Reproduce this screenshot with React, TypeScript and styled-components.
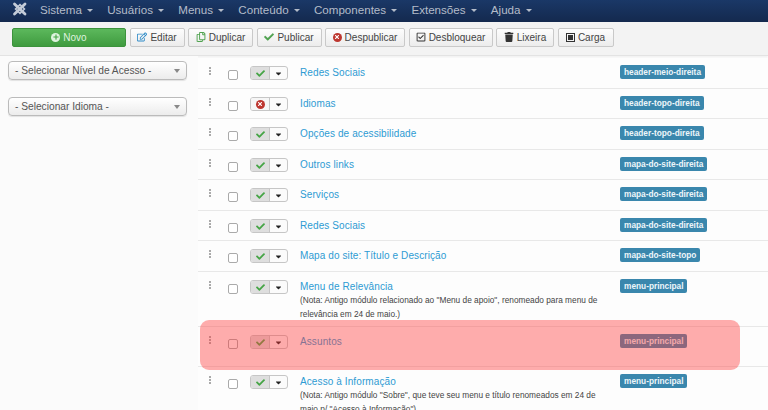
import React from "react";
import styled, { createGlobalStyle } from "styled-components";
import { FaCheck, FaTimes, FaPlus, FaRegEdit, FaRegCopy, FaRegCheckSquare, FaTrash, FaCaretDown } from "react-icons/fa";

const Global = createGlobalStyle`
  html, body { margin: 0; padding: 0; background: #fff; overflow: hidden; }
  body { width: 768px; height: 410px; font-family: "Liberation Sans", Arial, sans-serif; font-size: 10px; color: #333; }
`;

const Page = styled.div`
  position: relative;
  width: 768px;
  height: 410px;
  overflow: hidden;
`;

const Navbar = styled.nav`
  height: 22px;
  box-sizing: border-box;
  background: linear-gradient(#1a3867, #14294e);
  display: flex;
  align-items: center;
  padding: 0 0 4px 12px;
  color: #b4bcc9;
  font-size: 11.6px;
`;

const Logo = styled.svg`
  width: 16px;
  height: 14px;
  margin-right: 12px;
`;

const NavItem = styled.span`
  display: inline-flex;
  align-items: center;
  margin-right: 14.3px;
  white-space: nowrap;
  &::after {
    content: "";
    margin-left: 5px;
    margin-top: 2px;
    border-left: 3px solid transparent;
    border-right: 3px solid transparent;
    border-top: 3px solid #b4bcc9;
  }
`;

const Subhead = styled.div`
  height: 34px;
  box-sizing: border-box;
  background: #f3f3f3;
  border-bottom: 1px solid #e3e3e3;
  box-shadow: 0 2px 2px rgba(0, 0, 0, 0.05);
  display: flex;
  align-items: center;
  padding: 0 0 3px 12px;
  gap: 3.5px;
`;

const ToolButton = styled.button<{ $w: number }>`
  width: ${(p) => p.$w}px;
  height: 19px;
  padding: 0;
  display: inline-flex;
  align-items: center;
  justify-content: center;
  gap: 3px;
  background: linear-gradient(#fdfdfd, #ececec);
  border: 1px solid #c9c9c9;
  border-radius: 2px;
  color: #444;
  font: 10px "Liberation Sans", Arial, sans-serif;
  white-space: nowrap;
`;

const NewButton = styled(ToolButton)`
  background: linear-gradient(#5cb85c, #3f9b3f);
  border-color: #3c933c;
  color: #dff3df;
`;

const IconC = styled.span<{ $c: string }>`
  color: ${(p) => p.$c};
  display: inline-flex;
  font-size: 10px;
`;

const CircleIcon = styled.span<{ $bg: string; $c: string }>`
  width: 9px;
  height: 9px;
  border-radius: 50%;
  background: ${(p) => p.$bg};
  color: ${(p) => p.$c};
  display: inline-flex;
  align-items: center;
  justify-content: center;
  font-size: 6px;
`;

const SquareStop = styled.span`
  width: 9px;
  height: 9px;
  border: 1px solid #333;
  box-sizing: border-box;
  display: inline-flex;
  align-items: center;
  justify-content: center;
  &::after {
    content: "";
    width: 5px;
    height: 5px;
    background: #333;
  }
`;

const Main = styled.div`
  display: flex;
`;

const Sidebar = styled.aside`
  width: 198px;
  height: 354px;
  flex: none;
  padding: 5px 0 0 8px;
  box-sizing: border-box;
  background: #fbfbfb;
`;

const SelectBox = styled.div`
  width: 179px;
  height: 19px;
  box-sizing: border-box;
  display: flex;
  align-items: center;
  justify-content: space-between;
  padding: 0 6px;
  margin-bottom: 17px;
  border: 1px solid #bbb;
  border-radius: 4px;
  background: linear-gradient(#fff, #ececec);
  color: #555;
  font-size: 10.2px;
  box-shadow: 0 1px 1px rgba(0, 0, 0, 0.1);
  &::after {
    content: "";
    border-left: 3px solid transparent;
    border-right: 3px solid transparent;
    border-top: 4px solid #888;
  }
`;

const List = styled.div`
  flex: 1;
  min-width: 0;
  padding-top: 2px;
`;

const Row = styled.div<{ $h: number }>`
  height: ${(p) => p.$h}px;
  box-sizing: border-box;
  border-bottom: 1px solid #e8e8e8;
  display: grid;
  grid-template-columns: 20px 21px 50px 320px 1fr;
  padding: 9px 0 0 11px;
  background: #fdfdfd;
`;

const Drag = styled.span`
  width: 2px;
  height: 9px;
  background-image: linear-gradient(#aaa 2px, transparent 2px);
  background-size: 2px 3px;
`;

const Check = styled.span`
  width: 10px;
  height: 10px;
  box-sizing: border-box;
  margin: 3px 0 0 -1px;
  border: 1px solid #aaa;
  border-radius: 2px;
  background: #fff;
`;

const StatusGroup = styled.div`
  width: 38px;
  height: 14px;
  margin-top: -1px;
  display: flex;
  border: 1px solid #c6c6c6;
  border-radius: 3px;
  box-sizing: border-box;
  overflow: hidden;
  background: #fbfbfb;
`;

const StatusState = styled.span<{ $off?: boolean }>`
  width: 18px;
  display: flex;
  align-items: center;
  justify-content: center;
  background: ${(p) => (p.$off ? "#f6f6f6" : "#dedede")};
  border-right: 1px solid #c6c6c6;
  color: #46a546;
  font-size: 9px;
`;

const StatusCaret = styled.span`
  flex: 1;
  display: flex;
  align-items: center;
  justify-content: center;
  color: #222;
  font-size: 9px;
`;

const Title = styled.div`
  margin-top: -1px;
  font-size: 10px;
  line-height: 14px;
`;

const TitleLink = styled.a`
  color: #2d9bd3;
  display: block;
  letter-spacing: 0.1px;
`;

const Note = styled.div`
  color: #444;
  font-size: 8.3px;
  line-height: 14px;
  width: 312px;
  margin-top: -1px;
`;

const Badge = styled.span`
  display: inline-block;
  height: 14px;
  line-height: 14px;
  padding: 0 4px;
  border-radius: 2px;
  background: #3a87ad;
  color: #eef6fa;
  font-size: 8.3px;
  font-weight: bold;
`;

const BadgeCell = styled.div`
  margin-top: -2px;
`;

const Highlight = styled.div`
  position: absolute;
  left: 200px;
  top: 320px;
  width: 540px;
  height: 50px;
  border-radius: 9px;
  background: rgba(255, 60, 60, 0.42);
  pointer-events: none;
`;

type R = { t: string; b: string; h: number; off?: boolean; note?: string };

const rows: R[] = [
  { t: "Redes Sociais", b: "header-meio-direita", h: 31 },
  { t: "Idiomas", b: "header-topo-direita", h: 30, off: true },
  { t: "Opções de acessibilidade", b: "header-topo-direita", h: 31 },
  { t: "Outros links", b: "mapa-do-site-direita", h: 30 },
  { t: "Serviços", b: "mapa-do-site-direita", h: 31 },
  { t: "Redes Sociais", b: "mapa-do-site-direita", h: 30 },
  { t: "Mapa do site: Título e Descrição", b: "mapa-do-site-topo", h: 31 },
  {
    t: "Menu de Relevância",
    b: "menu-principal",
    h: 55,
    note: '(Nota: Antigo módulo relacionado ao "Menu de apoio", renomeado para menu de relevância em 24 de maio.)',
  },
  { t: "Assuntos", b: "menu-principal", h: 40 },
  {
    t: "Acesso à Informação",
    b: "menu-principal",
    h: 55,
    note: '(Nota: Antigo módulo "Sobre", que teve seu menu e título renomeados em 24 de maio p/ "Acesso à Informação")',
  },
];

export default function App() {
  return (
    <Page>
      <Global />
      <Navbar>
        <Logo viewBox="0 0 16 14">
          <g stroke="#c4ccd8" fill="none" strokeLinecap="round">
            <path d="M2.5 2 L13 12" strokeWidth="2.8" />
            <path d="M13 2 L2.5 12" strokeWidth="2.8" />
            <path d="M3.5 7 L8 2.6 L12.5 7 L8 11.4 Z" strokeWidth="1.5" />
          </g>
        </Logo>
        {["Sistema", "Usuários", "Menus", "Conteúdo", "Componentes", "Extensões", "Ajuda"].map((n) => (
          <NavItem key={n}>{n}</NavItem>
        ))}
      </Navbar>
      <Subhead>
        <NewButton $w={114}>
          <CircleIcon $bg="#dff3df" $c="#46a546"><FaPlus /></CircleIcon> Novo
        </NewButton>
        <ToolButton $w={55}><IconC $c="#2d8ac7"><FaRegEdit /></IconC> Editar</ToolButton>
        <ToolButton $w={65}><IconC $c="#51a351"><FaRegCopy /></IconC> Duplicar</ToolButton>
        <ToolButton $w={65}><IconC $c="#51a351"><FaCheck /></IconC> Publicar</ToolButton>
        <ToolButton $w={80}><CircleIcon $bg="#bd362f" $c="#fff"><FaTimes /></CircleIcon> Despublicar</ToolButton>
        <ToolButton $w={84}><IconC $c="#333"><FaRegCheckSquare /></IconC> Desbloquear</ToolButton>
        <ToolButton $w={58}><IconC $c="#333"><FaTrash /></IconC> Lixeira</ToolButton>
        <ToolButton $w={56}><SquareStop /> Carga</ToolButton>
      </Subhead>
      <Main>
        <Sidebar>
          <SelectBox>- Selecionar Nível de Acesso -</SelectBox>
          <SelectBox>- Selecionar Idioma -</SelectBox>
        </Sidebar>
        <List>
          {rows.map((r, i) => (
            <Row key={i} $h={r.h}>
              <Drag />
              <Check />
              <StatusGroup>
                <StatusState $off={r.off}>
                  {r.off ? <CircleIcon $bg="#bd362f" $c="#fff"><FaTimes /></CircleIcon> : <FaCheck />}
                </StatusState>
                <StatusCaret><FaCaretDown /></StatusCaret>
              </StatusGroup>
              <Title>
                <TitleLink>{r.t}</TitleLink>
                {r.note && <Note>{r.note}</Note>}
              </Title>
              <BadgeCell><Badge>{r.b}</Badge></BadgeCell>
            </Row>
          ))}
        </List>
      </Main>
      <Highlight />
    </Page>
  );
}
